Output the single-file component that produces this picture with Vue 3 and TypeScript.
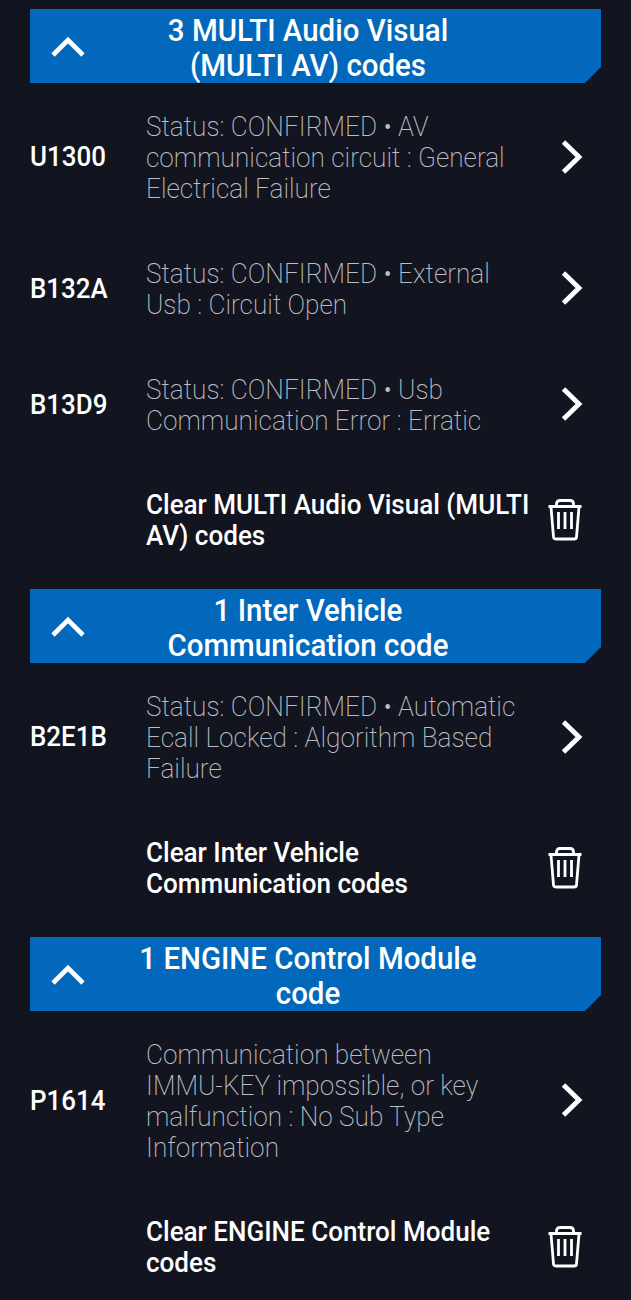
<script setup lang="ts">
interface Code { id: string; text: string }
interface Section { title: string; codes: Code[]; clear: string }
const sections: Section[] = [
  {
    title: '3 MULTI Audio Visual (MULTI AV) codes',
    codes: [
      { id: 'U1300', text: 'Status: CONFIRMED • AV communication circuit : General Electrical Failure' },
      { id: 'B132A', text: 'Status: CONFIRMED • External Usb : Circuit Open' },
      { id: 'B13D9', text: 'Status: CONFIRMED • Usb Communication Error : Erratic' },
    ],
    clear: 'Clear MULTI Audio Visual (MULTI AV) codes',
  },
  {
    title: '1 Inter Vehicle Communication code',
    codes: [{ id: 'B2E1B', text: 'Status: CONFIRMED • Automatic Ecall Locked : Algorithm Based Failure' }],
    clear: 'Clear Inter Vehicle Communication codes',
  },
  {
    title: '1 ENGINE Control Module code',
    codes: [{ id: 'P1614', text: 'Communication between IMMU-\u2060KEY impossible, or key malfunction : No Sub Type Information' }],
    clear: 'Clear ENGINE Control Module codes',
  },
]
</script>

<template>
  <main class="page">
    <section v-for="s in sections" :key="s.title" class="section">
      <header class="head">
        <svg class="caret" width="36" height="24" viewBox="0 0 36 24" aria-hidden="true">
          <path d="M3 20 L18 5 L33 20" fill="none" stroke="#fff" stroke-width="4.6" />
        </svg>
        <h2 class="title">{{ s.title }}</h2>
      </header>
      <div v-for="c in s.codes" :key="c.id" class="row">
        <span class="code">{{ c.id }}</span>
        <p class="desc">{{ c.text }}</p>
        <svg class="chev" width="24" height="36" viewBox="0 0 24 36" aria-hidden="true">
          <path d="M3.5 3 L19 18 L3.5 33" fill="none" stroke="#fff" stroke-width="4.8" />
        </svg>
      </div>
      <div class="row">
        <span class="code"></span>
        <p class="clear">{{ s.clear }}</p>
        <svg class="trash" width="34" height="42" viewBox="0 0 34 42" aria-hidden="true">
          <g fill="none" stroke="#fff" stroke-width="2.8">
            <path d="M0.5 7.5 H33.5" />
            <path d="M8.5 7 V5 Q8.5 1.5 12 1.5 H22 Q25.5 1.5 25.5 5 V7" />
            <path d="M3 8 L5.5 38 Q5.7 40 8 40 H26 Q28.3 40 28.5 38 L31 8" />
            <path d="M10.5 13 V30 M17 13 V30 M23.5 13 V30" />
          </g>
        </svg>
      </div>
    </section>
  </main>
</template>

<style>
body { background: #12151f; }
</style>

<style scoped>
.page {
  height: 1300px;
  overflow: hidden;
  box-sizing: border-box;
  padding: 9px 30px 0;
  background: #12151f;
  font-family: Roboto, sans-serif;
  color: #fff;
}
.section { margin-bottom: 11px; }
.head {
  height: 74px;
  display: flex;
  align-items: center;
  background: #0268bb;
  clip-path: polygon(0 0, 100% 0, 100% 58px, 555px 100%, 0 100%);
}
.caret { margin: 2px 0 0 20px; flex: none; }
.title {
  width: 360px;
  margin: 0 0 0 42px;
  padding-top: 3px;
  font-size: 31px;
  font-weight: 500;
  line-height: 35px;
  text-align: center;
  transform: scaleX(0.95);
}
.row {
  display: flex;
  align-items: center;
  padding: 27px 0;
}
.code {
  width: 116px;
  flex: none;
  padding-top: 1px;
  font-size: 27px;
  font-weight: 500;
  transform: scaleX(0.96);
  transform-origin: left center;
}
.desc, .clear {
  width: 414.5px;
  margin: 0 -28.5px 0 0;
  font-size: 28px;
  line-height: 31px;
  transform-origin: left center;
}
.desc {
  font-weight: 200;
  color: #bcbec3;
  transform: translateY(1px) scaleX(0.935);
}
.clear {
  font-weight: 500;
  color: #fff;
  transform: scaleX(0.93);
}
.chev { margin-left: 28px; flex: none; }
.trash { margin-left: 16px; flex: none; }
</style>
